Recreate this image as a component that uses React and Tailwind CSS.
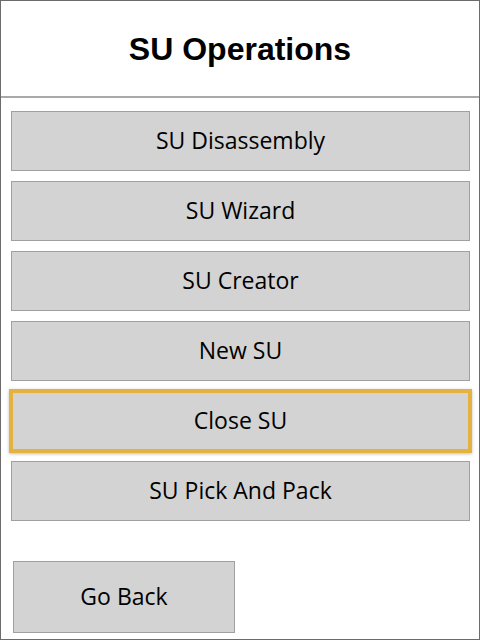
import React from "react";

const ops = ["SU Disassembly", "SU Wizard", "SU Creator", "New SU", "Close SU", "SU Pick And Pack"];

export default function App() {
  const selected = "Close SU";

  return (
    <div className="w-[480px] h-[640px] border border-[#6b6b6b] bg-white flex flex-col">
      <div className="h-[97px] flex items-center justify-center border-b-2 border-[#a9a9a9] shrink-0">
        <h1 className="text-[32px] font-bold text-black font-['Liberation_Sans',Arial,sans-serif]">
          SU Operations
        </h1>
      </div>

      <div className="flex flex-col gap-[10px] pl-[10px] pr-[9px] pt-[13px] font-['Open_Sans',sans-serif]">
        {ops.map((op) =>
          op === selected ? (
            <button
              key={op}
              className="h-[64px] -mx-[2px] -my-[2px] pb-[2px] bg-[#d3d3d3] border-[4px] border-[#e3b23f] shadow-[0_1px_3px_rgba(0,0,0,0.25)] text-[23px] text-black"
            >
              {op}
            </button>
          ) : (
            <button
              key={op}
              className="h-[60px] pb-[2px] bg-[#d3d3d3] border border-[#a0a0a0] text-[23px] text-black"
            >
              {op}
            </button>
          )
        )}
      </div>

      <div className="px-[12px] pt-[40px] font-['Open_Sans',sans-serif]">
        <button className="w-[222px] h-[72px] pb-[2px] bg-[#d3d3d3] border border-[#a0a0a0] text-[23px] text-black">
          Go Back
        </button>
      </div>
    </div>
  );
}
